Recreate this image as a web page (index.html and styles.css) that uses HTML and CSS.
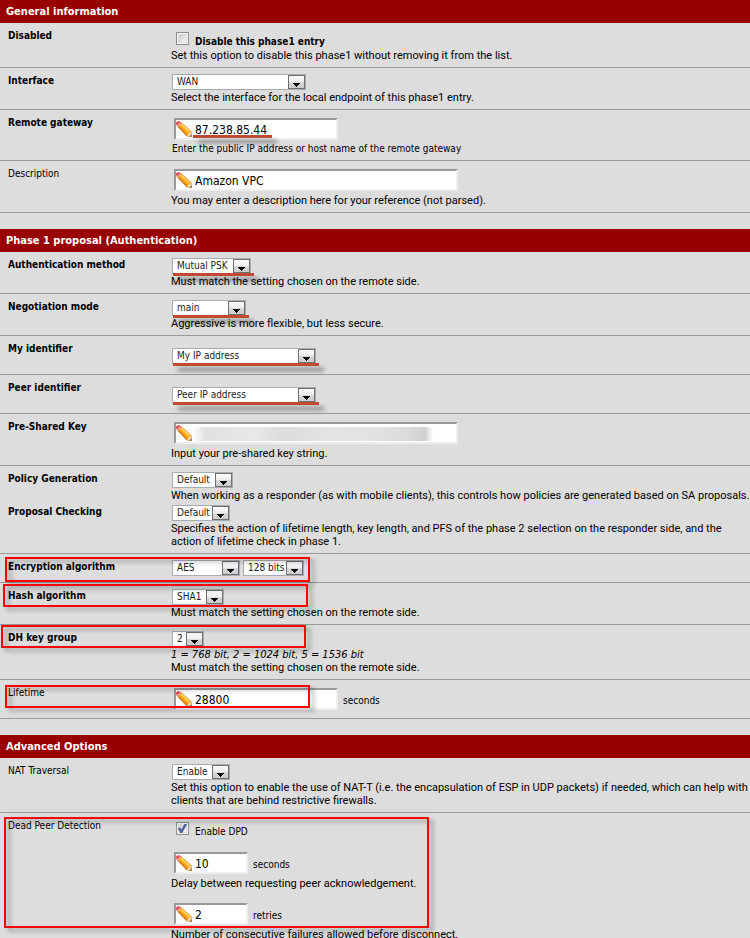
FILE: index.html
```
<!DOCTYPE html>
<html lang="en">
<head>
<meta charset="utf-8">
<title>VPN: IPsec: Edit Phase 1</title>
<link rel="stylesheet" href="styles.css">
</head>
<body>
<svg class="defs" aria-hidden="true">
  <symbol id="pencil" viewBox="0 0 16 16">
    <path d="M0 2.5Q0 .5 2 .3L4 .5 5.8 2 2.2 5.8.6 4.2z" fill="#e0404c"/>
    <path d="M3.8 1 5.6 2.6 2.5 5.9 1 4.2z" fill="#eca0a0"/>
    <path d="M5.4 1.8 15 10.2 15.8 15.6 10.6 15 1.7 5.8z" fill="#f9a61a"/>
    <path d="M5.8 2.6 14.2 10.2 12.8 11.6 4.2 3.8z" fill="#ffd35a"/>
    <path d="M3 5.2 11.7 13.8 10.8 14.8 1.8 5.8z" fill="#d9780f"/>
    <path d="M14.8 10.6 15.8 15.6 10.8 15 12 13.2z" fill="#f5dcb0"/>
    <path d="M15.3 13.6 15.9 15.9 13.4 15.4z" fill="#8a5a38"/>
    <path d="M5.4 1.8 15 10.2 15.8 15.6 10.6 15 1.7 5.8" fill="none" stroke="#c47420" stroke-width=".5"/>
  </symbol>
</svg>
<form>
  <section>
    <h2>General information</h2>
    <div class="row">
      <label class="name req" for="disabled">Disabled</label>
      <div class="body">
        <div class="check"><input type="checkbox" id="disabled"><label class="req" for="disabled">Disable this phase1 entry</label></div>
        <p>Set this option to disable this phase1 without removing it from the list.</p>
      </div>
    </div>
    <div class="row">
      <label class="name req" for="interface">Interface</label>
      <div class="body">
        <div class="pick"><select id="interface" class="w-134"><option>WAN</option></select></div>
        <p>Select the interface for the local endpoint of this phase1 entry.</p>
      </div>
    </div>
    <div class="row">
      <label class="name req" for="gateway">Remote gateway</label>
      <div class="body">
        <div class="entry"><span class="field w-164"><input type="text" id="gateway" value="87.238.85.44"><svg><use href="#pencil"/></svg><i class="mark mark-text"></i></span></div>
        <p class="small">Enter the public IP address or host name of the remote gateway</p>
      </div>
    </div>
    <div class="row">
      <label class="name" for="descr">Description</label>
      <div class="body">
        <div class="entry"><span class="field w-284"><input type="text" id="descr" value="Amazon VPC"><svg><use href="#pencil"/></svg></span></div>
        <p>You may enter a description here for your reference (not parsed).</p>
      </div>
    </div>
  </section>

  <section>
    <h2>Phase 1 proposal (Authentication)</h2>
    <div class="row">
      <label class="name req" for="auth">Authentication method</label>
      <div class="body">
        <div class="pick"><span class="marked"><select id="auth" class="w-79"><option>Mutual PSK</option></select><i class="mark"></i></span></div>
        <p>Must match the setting chosen on the remote side.</p>
      </div>
    </div>
    <div class="row">
      <label class="name req" for="mode">Negotiation mode</label>
      <div class="body">
        <div class="pick"><span class="marked"><select id="mode" class="w-74"><option>main</option></select><i class="mark"></i></span></div>
        <p>Aggressive is more flexible, but less secure.</p>
      </div>
    </div>
    <div class="row">
      <label class="name req" for="myid">My identifier</label>
      <div class="body">
        <div class="pick tall"><span class="marked"><select id="myid" class="w-144"><option>My IP address</option></select><i class="mark"></i></span></div>
      </div>
    </div>
    <div class="row">
      <label class="name req" for="peerid">Peer identifier</label>
      <div class="body">
        <div class="pick tall"><span class="marked"><select id="peerid" class="w-144"><option>Peer IP address</option></select><i class="mark"></i></span></div>
      </div>
    </div>
    <div class="row">
      <label class="name req" for="psk">Pre-Shared Key</label>
      <div class="body">
        <div class="entry"><span class="field w-284"><input type="text" id="psk"><svg><use href="#pencil"/></svg><i class="redacted"></i></span></div>
        <p>Input your pre-shared key string.</p>
      </div>
    </div>
    <div class="row joined">
      <label class="name req" for="policy">Policy Generation</label>
      <div class="body">
        <div class="pick"><select id="policy" class="w-61"><option>Default</option></select></div>
        <p>When working as a responder (as with mobile clients), this controls how policies are generated based on SA proposals.</p>
      </div>
    </div>
    <div class="row">
      <label class="name req" for="checking">Proposal Checking</label>
      <div class="body">
        <div class="pick"><select id="checking" class="w-58"><option>Default</option></select></div>
        <p>Specifies the action of lifetime length, key length, and PFS of the phase 2 selection on the responder side, and the action of lifetime check in phase 1.</p>
      </div>
    </div>
    <div class="row">
      <label class="name req" for="enc">Encryption algorithm</label>
      <div class="body">
        <div class="pick"><select id="enc" class="w-68"><option>AES</option></select><select class="w-61" aria-label="Key length"><option>128 bits</option></select></div>
      </div>
      <i class="box box-enc"></i>
    </div>
    <div class="row">
      <label class="name req" for="hash">Hash algorithm</label>
      <div class="body">
        <div class="pick"><select id="hash" class="w-52"><option>SHA1</option></select></div>
        <p>Must match the setting chosen on the remote side.</p>
      </div>
      <i class="box box-hash"></i>
    </div>
    <div class="row">
      <label class="name req" for="dh">DH key group</label>
      <div class="body">
        <div class="pick"><select id="dh" class="w-32"><option>2</option></select></div>
        <p><em>1 = 768 bit, 2 = 1024 bit, 5 = 1536 bit</em></p>
        <p>Must match the setting chosen on the remote side.</p>
      </div>
      <i class="box box-dh"></i>
    </div>
    <div class="row">
      <label class="name" for="lifetime">Lifetime</label>
      <div class="body">
        <div class="entry"><span class="field w-164"><input type="text" id="lifetime" value="28800"><svg><use href="#pencil"/></svg></span><span class="unit">seconds</span></div>
      </div>
      <i class="box box-life"></i>
    </div>
  </section>

  <section>
    <h2>Advanced Options</h2>
    <div class="row">
      <label class="name" for="nat">NAT Traversal</label>
      <div class="body">
        <div class="pick"><select id="nat" class="w-58"><option>Enable</option></select></div>
        <p>Set this option to enable the use of NAT-T (i.e. the encapsulation of ESP in UDP packets) if needed, which can help with clients that are behind restrictive firewalls.</p>
      </div>
    </div>
    <div class="row">
      <label class="name" for="dpd">Dead Peer Detection</label>
      <div class="body dpd">
        <div class="check"><input type="checkbox" id="dpd" checked><label for="dpd">Enable DPD</label></div>
        <div>
          <div class="entry"><span class="field w-74"><input type="text" value="10" aria-label="Delay"><svg><use href="#pencil"/></svg></span><span class="unit">seconds</span></div>
          <p>Delay between requesting peer acknowledgement.</p>
        </div>
        <div>
          <div class="entry"><span class="field w-74"><input type="text" value="2" aria-label="Retries"><svg><use href="#pencil"/></svg></span><span class="unit">retries</span></div>
          <p>Number of consecutive failures allowed before disconnect.</p>
        </div>
      </div>
      <i class="box box-dpd"></i>
    </div>
  </section>
</form>
</body>
</html>
```
FILE: styles.css
```
* { box-sizing: border-box; }
html { overflow: hidden; }
body {
  margin: 0;
  background: #ddd;
  color: #000;
  font: 10px/13px "DejaVu Sans Condensed", Tahoma, sans-serif;
}
.defs { position: absolute; width: 0; height: 0; }
section { margin-bottom: 16px; }
h2 {
  margin: 0;
  padding: 1px 6px 0;
  background: #900;
  color: #fff;
  font-size: 11px;
  line-height: 22px;
}
.row {
  position: relative;
  display: grid;
  grid-template-columns: 163px 1fr;
  padding: 6px 0 5px 8px;
  border-bottom: 1px solid #999;
}
.row.joined { padding-bottom: 0; border-bottom: 0; }
.joined p { margin-bottom: -3px; }
.req { font-weight: bold; }
p { margin: 0; font-family: Roboto, Tahoma, sans-serif; font-size: 11px; }
p.small { padding-left: 1px; font-family: inherit; font-size: 10px; line-height: 12px; }
em { font-family: "DejaVu Sans Condensed", Tahoma, sans-serif; }

.pick { display: flex; gap: 3px; padding: 0 0 1px 1px; }
.pick.tall { padding-top: 6px; padding-bottom: 5px; }
.marked { position: relative; display: flex; }
select {
  appearance: none;
  height: 16px;
  margin: 0;
  padding: 0 0 0 4px;
  border: 1px solid #a5acb2;
  border-radius: 0;
  background: #fff url("data:image/svg+xml,%3Csvg xmlns='http://www.w3.org/2000/svg' width='17' height='14'%3E%3Cdefs%3E%3ClinearGradient id='g' x2='0' y2='1'%3E%3Cstop stop-color='%23fafafa'/%3E%3Cstop offset='.5' stop-color='%23eee'/%3E%3Cstop offset='.55' stop-color='%23d5d5d5'/%3E%3Cstop offset='1' stop-color='%23ccc'/%3E%3C/linearGradient%3E%3C/defs%3E%3Crect x='.5' y='.5' width='16' height='13' fill='url(%23g)' stroke='%23707070'/%3E%3Cpath d='M5 8h7v1h-1v1h-1v1h-1v1h-1v-1h-1v-1h-1v-1h-1z'/%3E%3C/svg%3E") no-repeat right center;
  color: #222;
  font: inherit;
  line-height: 14px;
}
.w-32 { width: 32px; }
.w-52 { width: 52px; }
.w-58 { width: 58px; }
.w-61 { width: 61px; }
.w-68 { width: 68px; }
.w-74 { width: 74px; }
.w-79 { width: 79px; }
.w-134 { width: 134px; }
.w-144 { width: 144px; }
.w-164 { width: 164px; }
.w-284 { width: 284px; }

.entry { display: flex; gap: 5px; height: 27px; padding: 2px 0 0 3px; }
.unit { padding-top: 6px; }
.field { position: relative; display: flex; height: 22px; }
.field input {
  width: 100%;
  height: 22px;
  margin: 0;
  padding: 2px 0 0 19px;
  border: 2px solid;
  border-color: #999 #eee #eee #999;
  background: #fff;
  color: #000;
  font: 12px/16px "DejaVu Sans Condensed", Tahoma, sans-serif;
}
.field svg { position: absolute; left: 2px; top: 3px; width: 16px; height: 16px; }
.redacted {
  position: absolute;
  left: 19px;
  top: 5px;
  width: 240px;
  height: 14px;
  background: linear-gradient(90deg, #fff, #e2e0e3 12px, #e9e7ea 60px, #dddbde 90px, #e6e3e7 140px, #e4e1e5 180px, #dcdadd 215px, #cfd0d2 232px, #fff);
}

.check { display: flex; gap: 6px; height: 20px; padding-left: 5px; }
.check label { padding-top: 6px; }
.check input {
  appearance: none;
  width: 13px;
  height: 13px;
  margin: 3px 0 0;
  border: 1px solid #8e8f8f;
  background: linear-gradient(135deg, #cbcfd5, #f6f6f6) content-box #fff;
  padding: 2px;
  outline: 1px solid #f4f4f4;
  outline-offset: -2px;
}
.check input:checked {
  background: url("data:image/svg+xml,%3Csvg xmlns='http://www.w3.org/2000/svg' viewBox='0 0 11 11'%3E%3Cpath d='M2.5 5 4.5 8.5 8.5 1.5' fill='none' stroke='%234a5f97' stroke-width='2'/%3E%3C/svg%3E") border-box, linear-gradient(135deg, #cbcfd5, #f6f6f6) content-box #fff;
}
.dpd { display: grid; gap: 11px; }

.mark {
  position: absolute;
  left: 1px;
  right: -3px;
  top: 15px;
  height: 3px;
  background: #c24a33;
  filter: drop-shadow(5px 5px 2px rgba(0, 0, 0, .45));
}
.mark-text { left: 19px; right: 66px; top: 17px; }
.box {
  position: absolute;
  width: 305px;
  height: 25px;
  border: 2px solid #f00;
  filter: drop-shadow(4px 3px 2px rgba(0, 0, 0, .35));
  pointer-events: none;
}
.box-enc { left: 5px; top: 3px; }
.box-hash { left: 3px; top: 1px; height: 23px; }
.box-dh { left: 1px; top: 0; height: 23px; }
.box-life { left: 5px; top: 5px; height: 23px; }
.box-dpd { left: 4px; top: 4px; width: 425px; height: 111px; }
```
